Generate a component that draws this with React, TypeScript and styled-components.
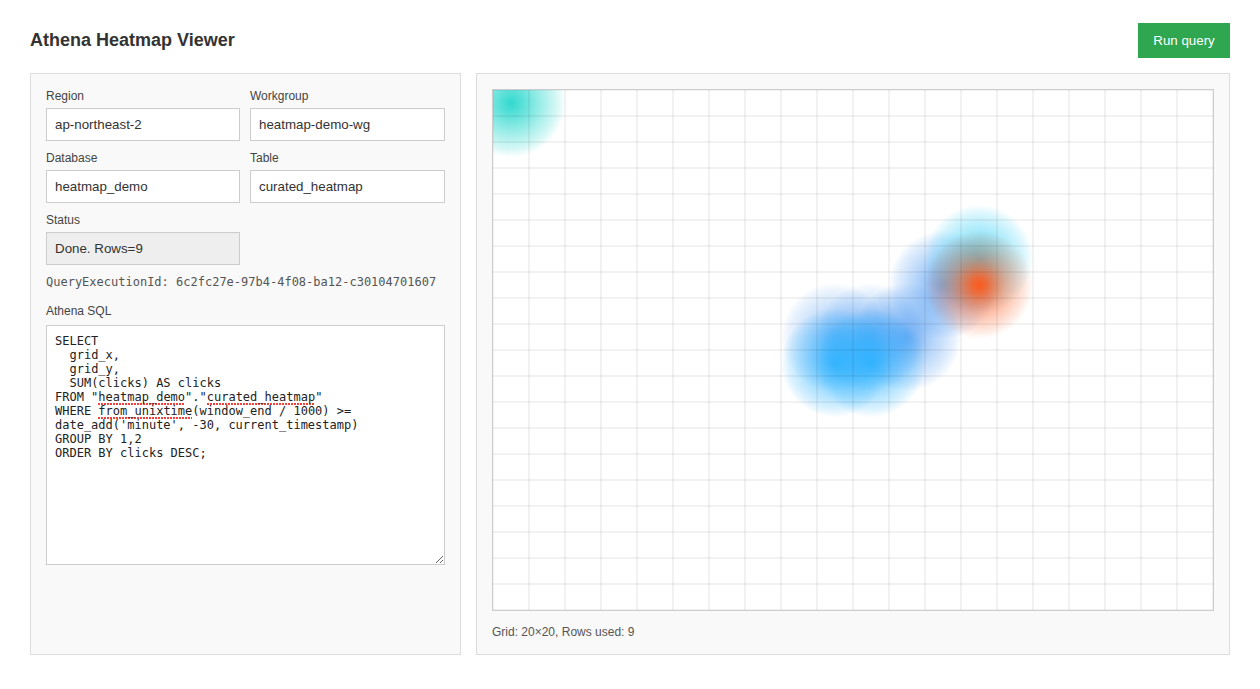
import React from "react";
import styled, { createGlobalStyle } from "styled-components";

const Global = createGlobalStyle`
  html, body { margin: 0; padding: 0; background: #fff; }
  body { font-family: "Liberation Sans", Arial, sans-serif; color: #333; }
  * { box-sizing: border-box; }
`;

const Page = styled.div`
  padding: 23px 30px 0;
`;
const Header = styled.header`
  display: flex;
  align-items: center;
  justify-content: space-between;
  margin-bottom: 15px;
`;
const Title = styled.h1`
  margin: 0;
  font-size: 18px;
  line-height: 35px;
  font-weight: 700;
  color: #333;
`;
const RunButton = styled.button`
  height: 35px;
  width: 92px;
  padding: 0;
  border: 0;
  border-radius: 0;
  background: #2fa650;
  color: #fff;
  font: 13.333px "Liberation Sans", Arial, sans-serif;
`;
const Columns = styled.main`
  display: grid;
  grid-template-columns: 431px 754px;
  gap: 15px;
`;
const Panel = styled.section`
  background: #f9f9f9;
  border: 1px solid #ddd;
  padding: 15px;
`;
const FieldGrid = styled.div`
  display: grid;
  grid-template-columns: 194px 195px;
  column-gap: 10px;
  row-gap: 10px;
`;
const Field = styled.div`
  display: flex;
  flex-direction: column;
`;
const Label = styled.label`
  font-size: 12px;
  line-height: 14px;
  color: #444;
  margin-bottom: 5px;
`;
const TextInput = styled.input<{ $muted?: boolean }>`
  width: 100%;
  height: 33px;
  padding: 0 8px;
  border: 1px solid #ccc;
  border-radius: 0;
  outline: none;
  background: ${(p) => (p.$muted ? "#eee" : "#fff")};
  color: #333;
  font: 13.333px "Liberation Sans", Arial, sans-serif;
`;
const QueryId = styled.div`
  margin-top: 10px;
  font: 12px/14px "DejaVu Sans Mono", monospace;
  color: #555;
`;
const SqlField = styled(Field)`
  margin-top: 15px;
`;
const SqlLabel = styled(Label)`
  margin-bottom: 7px;
`;
const SqlBox = styled.div`
  height: 240px;
  padding: 8px;
  border: 1px solid #ccc;
  background: #fff;
  color: #222;
  font: 12px/14px "DejaVu Sans Mono", monospace;
  white-space: pre-wrap;
  overflow: auto;
  resize: vertical;
`;
const Misspelt = styled.span`
  padding-bottom: 1px;
  background-image: radial-gradient(circle at 1px 1px, #f0423c 1px, transparent 1px);
  background-size: 3px 2px;
  background-repeat: repeat-x;
  background-position: 0 100%;
`;
const HeatFrame = styled.div`
  width: 722px;
  height: 522px;
  border: 1px solid #ccc;
  background: #fff;
  line-height: 0;
`;
const Caption = styled.div`
  margin-top: 14px;
  font-size: 12px;
  line-height: 14px;
  color: #555;
`;

const CELL_W = 36;
const CELL_H = 26;
const RADIUS = 54;

type Blob = { i: number; j: number; fill: string; alpha: number };
const blobs: Blob[] = [
  { i: 0, j: 0, fill: "teal", alpha: 0.92 },
  { i: 9, j: 9, fill: "blue", alpha: 0.55 },
  { i: 10, j: 9, fill: "blue", alpha: 0.55 },
  { i: 11, j: 9, fill: "blue", alpha: 0.7 },
  { i: 9, j: 10, fill: "sky", alpha: 0.85 },
  { i: 10, j: 10, fill: "sky", alpha: 0.85 },
  { i: 12, j: 7, fill: "blue", alpha: 0.72 },
  { i: 13, j: 6, fill: "cyan", alpha: 0.9 },
  { i: 13, j: 7, fill: "orange", alpha: 1 },
];

const softFalloff = [
  [0, 1],
  [0.3, 0.72],
  [0.6, 0.43],
  [0.85, 0.2],
  [1, 0.01],
];
const coreFalloff = [
  [0, 1],
  [0.15, 0.86],
  [0.3, 0.66],
  [0.5, 0.43],
  [0.7, 0.26],
  [0.85, 0.14],
  [1, 0],
];
const palette: [string, string, number[][]][] = [
  ["teal", "#1fd6cb", softFalloff],
  ["blue", "#3b8ff0", softFalloff],
  ["sky", "#25b0ff", softFalloff],
  ["cyan", "#3cd0f6", softFalloff],
  ["orange", "#fb5a1e", coreFalloff],
];
const lineStops = Array.from({ length: 21 }, (_, n) => n);

const Heatmap = () => (
  <svg width={720} height={520} viewBox="0 0 720 520" aria-label="Heatmap">
    <defs>
      {palette.map(([id, color, stops]) => (
        <radialGradient key={id} id={id}>
          {stops.map(([offset, opacity]) => (
            <stop key={offset} offset={offset} stopColor={color} stopOpacity={opacity} />
          ))}
        </radialGradient>
      ))}
    </defs>
    {blobs.map((b) => (
      <circle
        key={`${b.i}-${b.j}`}
        cx={(b.i + 0.5) * CELL_W}
        cy={(b.j + 0.5) * CELL_H}
        r={RADIUS}
        fill={`url(#${b.fill})`}
        opacity={b.alpha}
      />
    ))}
    {lineStops.map((n) => (
      <line
        key={`v${n}`}
        x1={n * CELL_W}
        x2={n * CELL_W}
        y1={0}
        y2={520}
        stroke="#000"
        strokeOpacity={0.07}
        strokeWidth={1.5}
      />
    ))}
    {lineStops.map((n) => (
      <line
        key={`h${n}`}
        y1={n * CELL_H}
        y2={n * CELL_H}
        x1={0}
        x2={720}
        stroke="#000"
        strokeOpacity={0.07}
        strokeWidth={1.5}
      />
    ))}
  </svg>
);

export default function App() {
  return (
    <Page>
      <Global />
      <Header>
        <Title>Athena Heatmap Viewer</Title>
        <RunButton>Run query</RunButton>
      </Header>
      <Columns>
        <Panel>
          <FieldGrid>
            <Field>
              <Label>Region</Label>
              <TextInput readOnly value="ap-northeast-2" />
            </Field>
            <Field>
              <Label>Workgroup</Label>
              <TextInput readOnly value="heatmap-demo-wg" />
            </Field>
            <Field>
              <Label>Database</Label>
              <TextInput readOnly value="heatmap_demo" />
            </Field>
            <Field>
              <Label>Table</Label>
              <TextInput readOnly value="curated_heatmap" />
            </Field>
            <Field>
              <Label>Status</Label>
              <TextInput readOnly $muted value="Done. Rows=9" />
            </Field>
          </FieldGrid>
          <QueryId>QueryExecutionId: 6c2fc27e-97b4-4f08-ba12-c30104701607</QueryId>
          <SqlField>
            <SqlLabel>Athena SQL</SqlLabel>
            <SqlBox role="textbox">
              {`SELECT
  grid_x,
  grid_y,
  SUM(clicks) AS clicks
FROM "`}
              <Misspelt>heatmap_demo</Misspelt>
              {`"."`}
              <Misspelt>curated_heatmap</Misspelt>
              {`"
WHERE `}
              <Misspelt>from_unixtime</Misspelt>
              {`(window_end / 1000) >=
date_add('minute', -30, current_timestamp)
GROUP BY 1,2
ORDER BY clicks DESC;`}
            </SqlBox>
          </SqlField>
        </Panel>
        <Panel>
          <HeatFrame>
            <Heatmap />
          </HeatFrame>
          <Caption>Grid: 20×20, Rows used: 9</Caption>
        </Panel>
      </Columns>
    </Page>
  );
}
